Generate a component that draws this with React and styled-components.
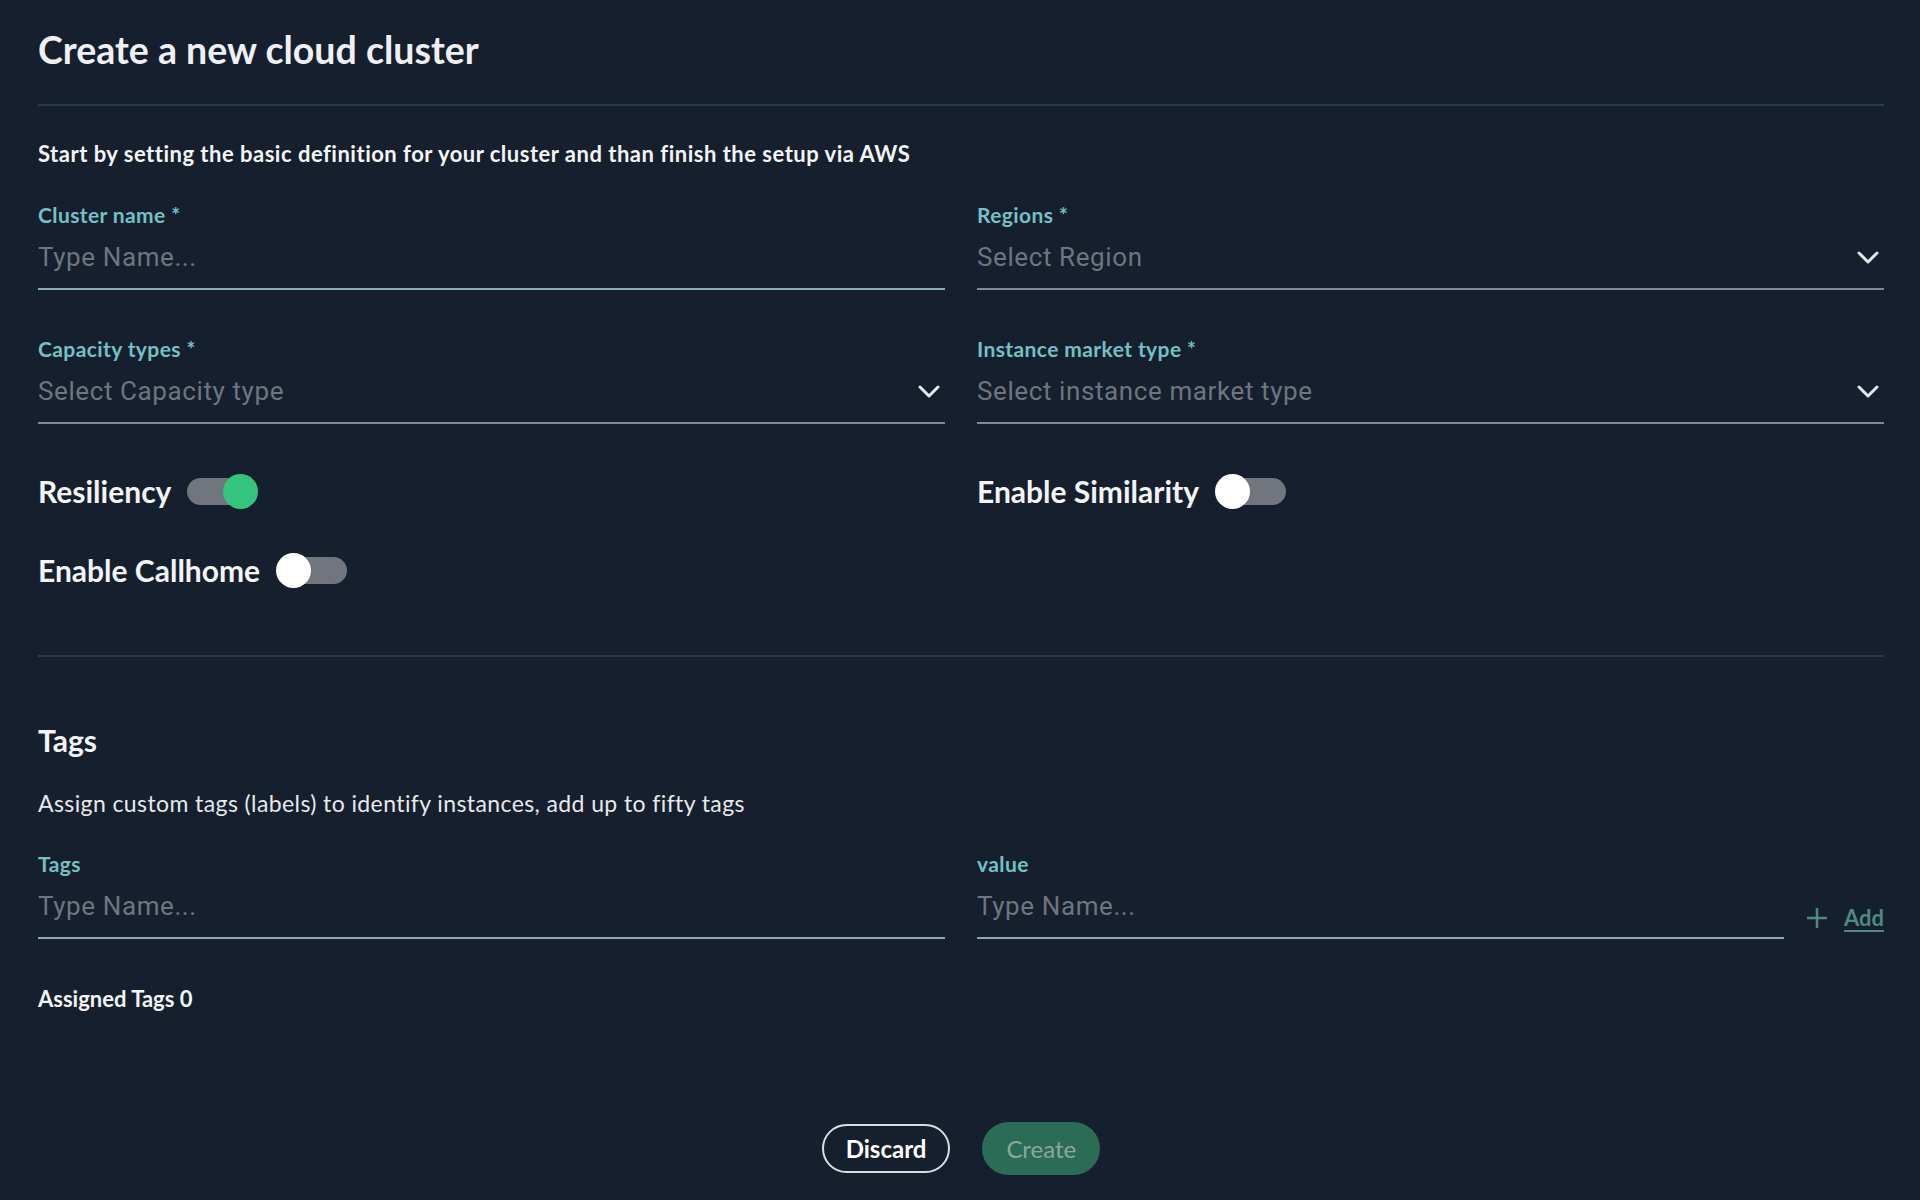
import React, { useState } from "react";
import styled, { createGlobalStyle } from "styled-components";

const Global = createGlobalStyle`
  html, body { margin: 0; padding: 0; background: #161f2d; }
  * { box-sizing: border-box; }
`;

const Page = styled.div`
  min-height: 100vh;
  background: #161f2d;
  padding: 0 36px 40px 38px;
  font-family: Lato, "Open Sans", sans-serif;
  color: #f1f3f5;
`;

const Header = styled.header`
  padding: 28px 0 32px;
  border-bottom: 2px solid #263a4f;
`;

const Title = styled.h1`
  margin: 0;
  font-size: 37.5px;
  line-height: 44px;
  font-weight: 700;
  color: #eef0f3;
`;

const Intro = styled.p`
  margin: 34px 0 0;
  font-size: 22px;
  line-height: 28px;
  font-weight: 700;
  letter-spacing: 0.5px;
  color: #f3f5f7;
`;

const FieldGrid = styled.div`
  display: grid;
  grid-template-columns: 1fr 1fr;
  column-gap: 32px;
  row-gap: 47px;
  margin-top: ${(p) => p.$top}px;
`;

const Field = styled.label`
  display: flex;
  flex-direction: column;
  min-width: 0;
  flex: 1;
`;

const FieldLabel = styled.span`
  font-size: 21px;
  line-height: 24px;
  font-weight: 700;
  letter-spacing: 0.4px;
  color: #73c1c6;
  margin-bottom: 12px;
`;

const TextInput = styled.input`
  height: 51px;
  padding: 0 0 13px;
  border: none;
  border-bottom: 2px solid #8aa9b5;
  background: transparent;
  outline: none;
  font-family: Roboto, "Liberation Sans", sans-serif;
  font-size: 26px;
  line-height: 36px;
  letter-spacing: 0.6px;
  color: #e8ebee;
  &::placeholder { color: #6d7580; }
`;

const SelectBox = styled.div`
  height: 51px;
  padding: 0 5px 13px 0;
  display: flex;
  align-items: center;
  justify-content: space-between;
  border-bottom: 2px solid #7f8a95;
  cursor: pointer;
`;

const SelectText = styled.span`
  font-family: Roboto, "Liberation Sans", sans-serif;
  font-size: 26px;
  line-height: 36px;
  letter-spacing: 0.6px;
  color: #6d7580;
`;

const ToggleGrid = styled.div`
  display: grid;
  grid-template-columns: 1fr 1fr;
  column-gap: 32px;
  row-gap: 43px;
  margin-top: 49px;
`;

const ToggleRow = styled.div`
  display: flex;
  align-items: center;
  gap: 16px;
  height: 36px;
`;

const ToggleLabel = styled.span`
  font-size: 30px;
  line-height: 36px;
  font-weight: 700;
  color: #f2f4f6;
`;

const Switch = styled.button`
  position: relative;
  width: 71px;
  height: 35px;
  padding: 0;
  border: none;
  background: transparent;
  cursor: pointer;
`;

const Track = styled.span`
  position: absolute;
  left: ${(p) => (p.$on ? 0 : 4)}px;
  right: ${(p) => (p.$on ? 6 : 0)}px;
  top: 4px;
  height: 27px;
  border-radius: 14px;
  background: #70757e;
`;

const Knob = styled.span`
  position: absolute;
  top: 0;
  left: ${(p) => (p.$on ? 36 : 0)}px;
  width: 35px;
  height: 35px;
  border-radius: 50%;
  background: ${(p) => (p.$on ? "#34c47d" : "#ffffff")};
`;

const Divider = styled.hr`
  margin: 67px 0 0;
  border: none;
  border-top: 2px solid #263a4f;
`;

const SectionTitle = styled.h2`
  margin: 65px 0 0;
  font-size: 30px;
  line-height: 36px;
  font-weight: 700;
  color: #f2f4f6;
`;

const SectionText = styled.p`
  margin: 31px 0 0;
  font-size: 23px;
  line-height: 28px;
  font-weight: 400;
  letter-spacing: 0.4px;
  color: #e6e9ec;
`;

const ValueRow = styled.div`
  display: flex;
  align-items: flex-end;
  gap: 22px;
`;

const AddButton = styled.button`
  display: flex;
  align-items: center;
  gap: 16px;
  padding: 0 0 8px;
  border: none;
  background: transparent;
  cursor: pointer;
  color: #4d8a80;
  font-family: Lato, "Open Sans", sans-serif;
  font-size: 22px;
  font-weight: 700;
`;

const AddText = styled.span`
  text-decoration: underline;
  text-underline-offset: 4px;
  text-decoration-thickness: 2px;
`;

const Assigned = styled.div`
  margin-top: 47px;
  font-size: 22px;
  line-height: 26px;
  font-weight: 700;
  color: #f2f4f6;
`;

const Actions = styled.div`
  display: flex;
  justify-content: center;
  align-items: center;
  gap: 32px;
  margin-top: 110px;
`;

const Button = styled.button`
  height: ${(p) => (p.$primary ? 53 : 49)}px;
  padding: 0 ${(p) => (p.$primary ? 24 : 22)}px;
  border-radius: 27px;
  font-family: Lato, "Open Sans", sans-serif;
  font-size: 24px;
  cursor: pointer;
  border: ${(p) => (p.$primary ? "none" : "2px solid #d9dde2")};
  background: ${(p) => (p.$primary ? "#2a6c55" : "transparent")};
  color: ${(p) => (p.$primary ? "#8ea79b" : "#ffffff")};
  font-weight: ${(p) => (p.$primary ? 400 : 700)};
`;

const Chevron = () => (
  <svg width="22" height="13" viewBox="0 0 22 13" fill="none">
    <polyline
      points="2,2 11,11 20,2"
      stroke="#e4e7eb"
      strokeWidth="3"
      strokeLinecap="round"
      strokeLinejoin="round"
    />
  </svg>
);

const Plus = () => (
  <svg width="22" height="22" viewBox="0 0 22 22" fill="none">
    <path d="M11 1v20M1 11h20" stroke="currentColor" strokeWidth="2.5" />
  </svg>
);

function Select({ label, placeholder }) {
  return (
    <Field as="div">
      <FieldLabel>{label}</FieldLabel>
      <SelectBox>
        <SelectText>{placeholder}</SelectText>
        <Chevron />
      </SelectBox>
    </Field>
  );
}

function Toggle({ label, initial }) {
  const [on, setOn] = useState(initial);
  return (
    <ToggleRow>
      <ToggleLabel>{label}</ToggleLabel>
      <Switch role="switch" aria-checked={on} onClick={() => setOn(!on)}>
        <Track $on={on} />
        <Knob $on={on} />
      </Switch>
    </ToggleRow>
  );
}

export default function App() {
  return (
    <>
      <Global />
      <Page>
        <Header>
          <Title>Create a new cloud cluster</Title>
        </Header>
        <Intro>
          Start by setting the basic definition for your cluster and than finish the setup via AWS
        </Intro>

        <FieldGrid $top={35}>
          <Field>
            <FieldLabel>Cluster name *</FieldLabel>
            <TextInput placeholder="Type Name..." />
          </Field>
          <Select label="Regions *" placeholder="Select Region" />
          <Select label="Capacity types *" placeholder="Select Capacity type" />
          <Select label="Instance market type *" placeholder="Select instance market type" />
        </FieldGrid>

        <ToggleGrid>
          <Toggle label="Resiliency" initial={true} />
          <Toggle label="Enable Similarity" initial={false} />
          <Toggle label="Enable Callhome" initial={false} />
        </ToggleGrid>

        <Divider />

        <SectionTitle>Tags</SectionTitle>
        <SectionText>Assign custom tags (labels) to identify instances, add up to fifty tags</SectionText>

        <FieldGrid $top={35}>
          <Field>
            <FieldLabel>Tags</FieldLabel>
            <TextInput placeholder="Type Name..." />
          </Field>
          <ValueRow>
            <Field>
              <FieldLabel>value</FieldLabel>
              <TextInput placeholder="Type Name..." />
            </Field>
            <AddButton>
              <Plus />
              <AddText>Add</AddText>
            </AddButton>
          </ValueRow>
        </FieldGrid>

        <Assigned>Assigned Tags 0</Assigned>

        <Actions>
          <Button>Discard</Button>
          <Button $primary>Create</Button>
        </Actions>
      </Page>
    </>
  );
}
